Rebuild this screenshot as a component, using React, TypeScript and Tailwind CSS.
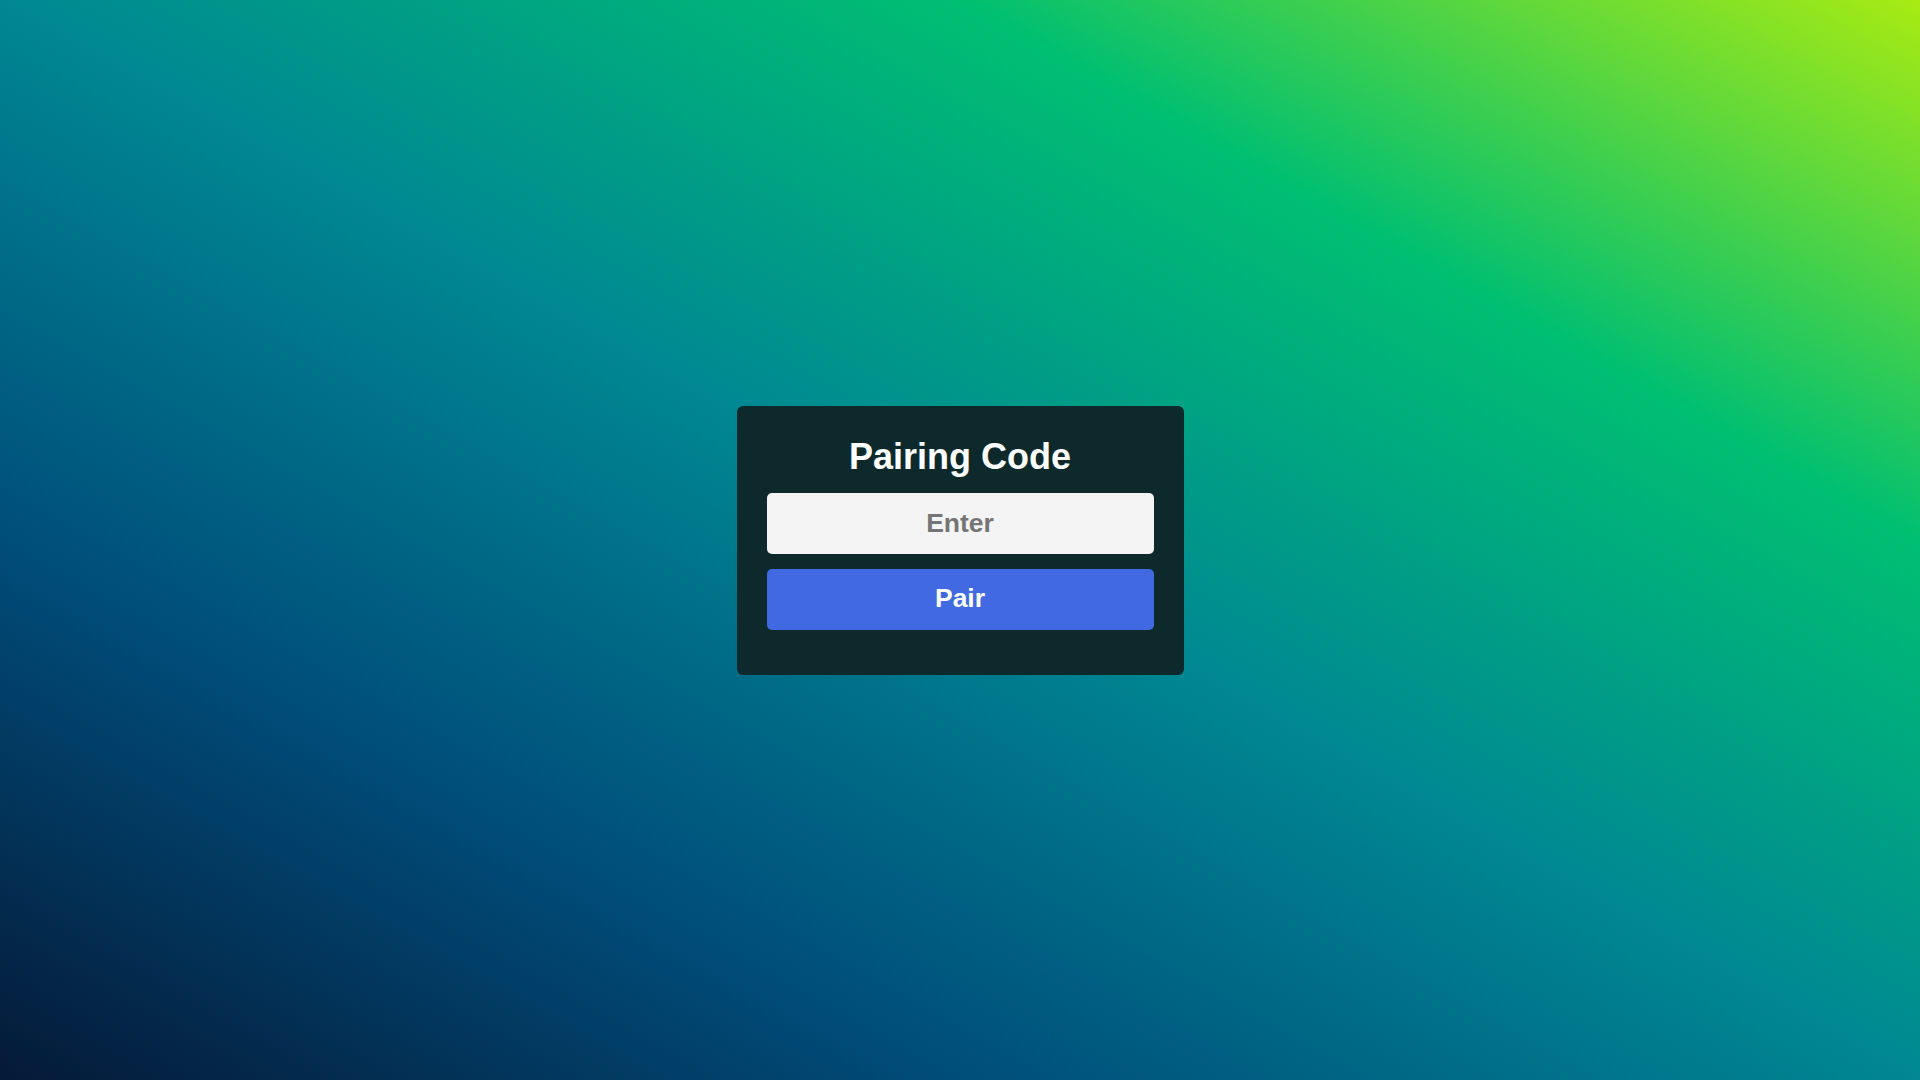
export default function App() {
  return (
    <div className="min-h-screen w-full flex items-center justify-center bg-[linear-gradient(to_right_top,#051937,#004d7a,#008793,#00bf72,#a8eb12)] font-['Liberation_Sans',Arial,sans-serif]">
      <div className="w-[447px] rounded-[6px] bg-[#0e292b] px-[30px] pt-[31px] pb-[45px] flex flex-col">
        <h2 className="text-center text-white font-bold text-[36px] leading-[40px] mb-[16px]">
          Pairing Code
        </h2>
        <input
          type="text"
          placeholder="Enter"
          className="h-[61px] w-full rounded-[5px] bg-[#f4f4f4] text-center text-[26.5px] font-bold text-[#333] placeholder:text-[#757575] outline-none"
        />
        <button className="mt-[15px] h-[61px] w-full rounded-[5px] bg-[#4169e1] text-white text-[26.5px] font-bold">
          Pair
        </button>
      </div>
    </div>
  );
}
